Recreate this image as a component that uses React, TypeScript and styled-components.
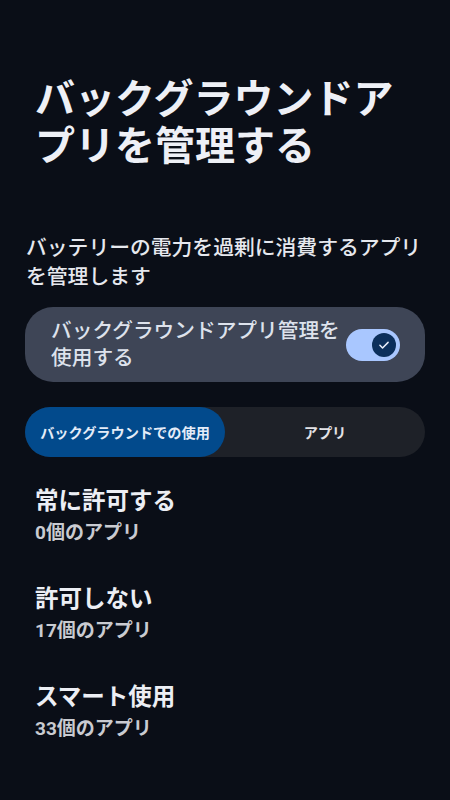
import React from "react";
import styled, { createGlobalStyle } from "styled-components";

const Global = createGlobalStyle`
  html, body { margin: 0; padding: 0; background: #0a0e17; }
  body { font-family: Roboto, "Noto Sans CJK JP", sans-serif; }
`;

const Page = styled.div`
  width: 450px;
  height: 800px;
  background: #0a0e17;
  box-sizing: border-box;
  padding: 0 25px;
  overflow: hidden;
`;

const Title = styled.h1`
  margin: 76px 0 0 10px;
  font-size: 40px;
  line-height: 47px;
  font-weight: 700;
  color: #eef0f6;
  letter-spacing: 0;
`;

const Description = styled.p`
  margin: 64px 0 0 1px;
  font-size: 20.8px;
  line-height: 29px;
  font-weight: 500;
  color: #e6e8ee;
`;

const ToggleCard = styled.div`
  margin-top: 15px;
  height: 75px;
  box-sizing: border-box;
  border-radius: 28px;
  background: #3e4556;
  display: flex;
  align-items: center;
  padding: 0 25px 0 26px;
`;

const CardLabel = styled.div`
  flex: 1;
  font-size: 20.7px;
  line-height: 27px;
  font-weight: 500;
  color: #dde2ec;
`;

const Track = styled.div`
  width: 54px;
  height: 32px;
  border-radius: 16px;
  background: #a9c7ff;
  display: flex;
  align-items: center;
  justify-content: flex-end;
  padding: 0 4px;
  box-sizing: border-box;
  flex-shrink: 0;
`;

const Thumb = styled.div`
  width: 24px;
  height: 24px;
  border-radius: 50%;
  background: #0b2f5c;
  display: flex;
  align-items: center;
  justify-content: center;
`;

const Tabs = styled.div`
  margin-top: 25px;
  height: 50px;
  border-radius: 25px;
  background: #1e2128;
  display: grid;
  grid-template-columns: 1fr 1fr;
`;

const Tab = styled.div<{ $active?: boolean }>`
  border-radius: 25px;
  display: flex;
  align-items: center;
  justify-content: center;
  background: ${(p) => (p.$active ? "#024a8c" : "transparent")};
  color: ${(p) => (p.$active ? "#e4ecf8" : "#e2e2e6")};
  font-size: 14.2px;
  font-weight: 700;
`;

const List = styled.div`
  margin-top: 29px;
  display: flex;
  flex-direction: column;
  gap: 36px;
  padding-left: 10px;
`;

const Item = styled.div`
  display: flex;
  flex-direction: column;
`;

const ItemTitle = styled.div`
  font-size: 23.5px;
  line-height: 31px;
  font-weight: 700;
  color: #eceef4;
`;

const ItemSub = styled.div`
  font-size: 19px;
  line-height: 31px;
  font-weight: 700;
  color: #c9cbd1;
`;

const items = [
  { title: "常に許可する", sub: "0個のアプリ" },
  { title: "許可しない", sub: "17個のアプリ" },
  { title: "スマート使用", sub: "33個のアプリ" },
];

export default function App() {
  return (
    <>
      <Global />
      <Page>
        <Title>バックグラウンドアプリを管理する</Title>
        <Description>バッテリーの電力を過剰に消費するアプリを管理します</Description>
        <ToggleCard>
          <CardLabel>バックグラウンドアプリ管理を使用する</CardLabel>
          <Track>
            <Thumb>
              <svg width="14" height="14" viewBox="0 0 24 24" fill="none">
                <path d="M5 12.5l4.5 4.5L19 7.5" stroke="#e8eefa" strokeWidth="2.6" strokeLinecap="round" strokeLinejoin="round" />
              </svg>
            </Thumb>
          </Track>
        </ToggleCard>
        <Tabs>
          <Tab $active>バックグラウンドでの使用</Tab>
          <Tab>アプリ</Tab>
        </Tabs>
        <List>
          {items.map((it) => (
            <Item key={it.title}>
              <ItemTitle>{it.title}</ItemTitle>
              <ItemSub>{it.sub}</ItemSub>
            </Item>
          ))}
        </List>
      </Page>
    </>
  );
}
